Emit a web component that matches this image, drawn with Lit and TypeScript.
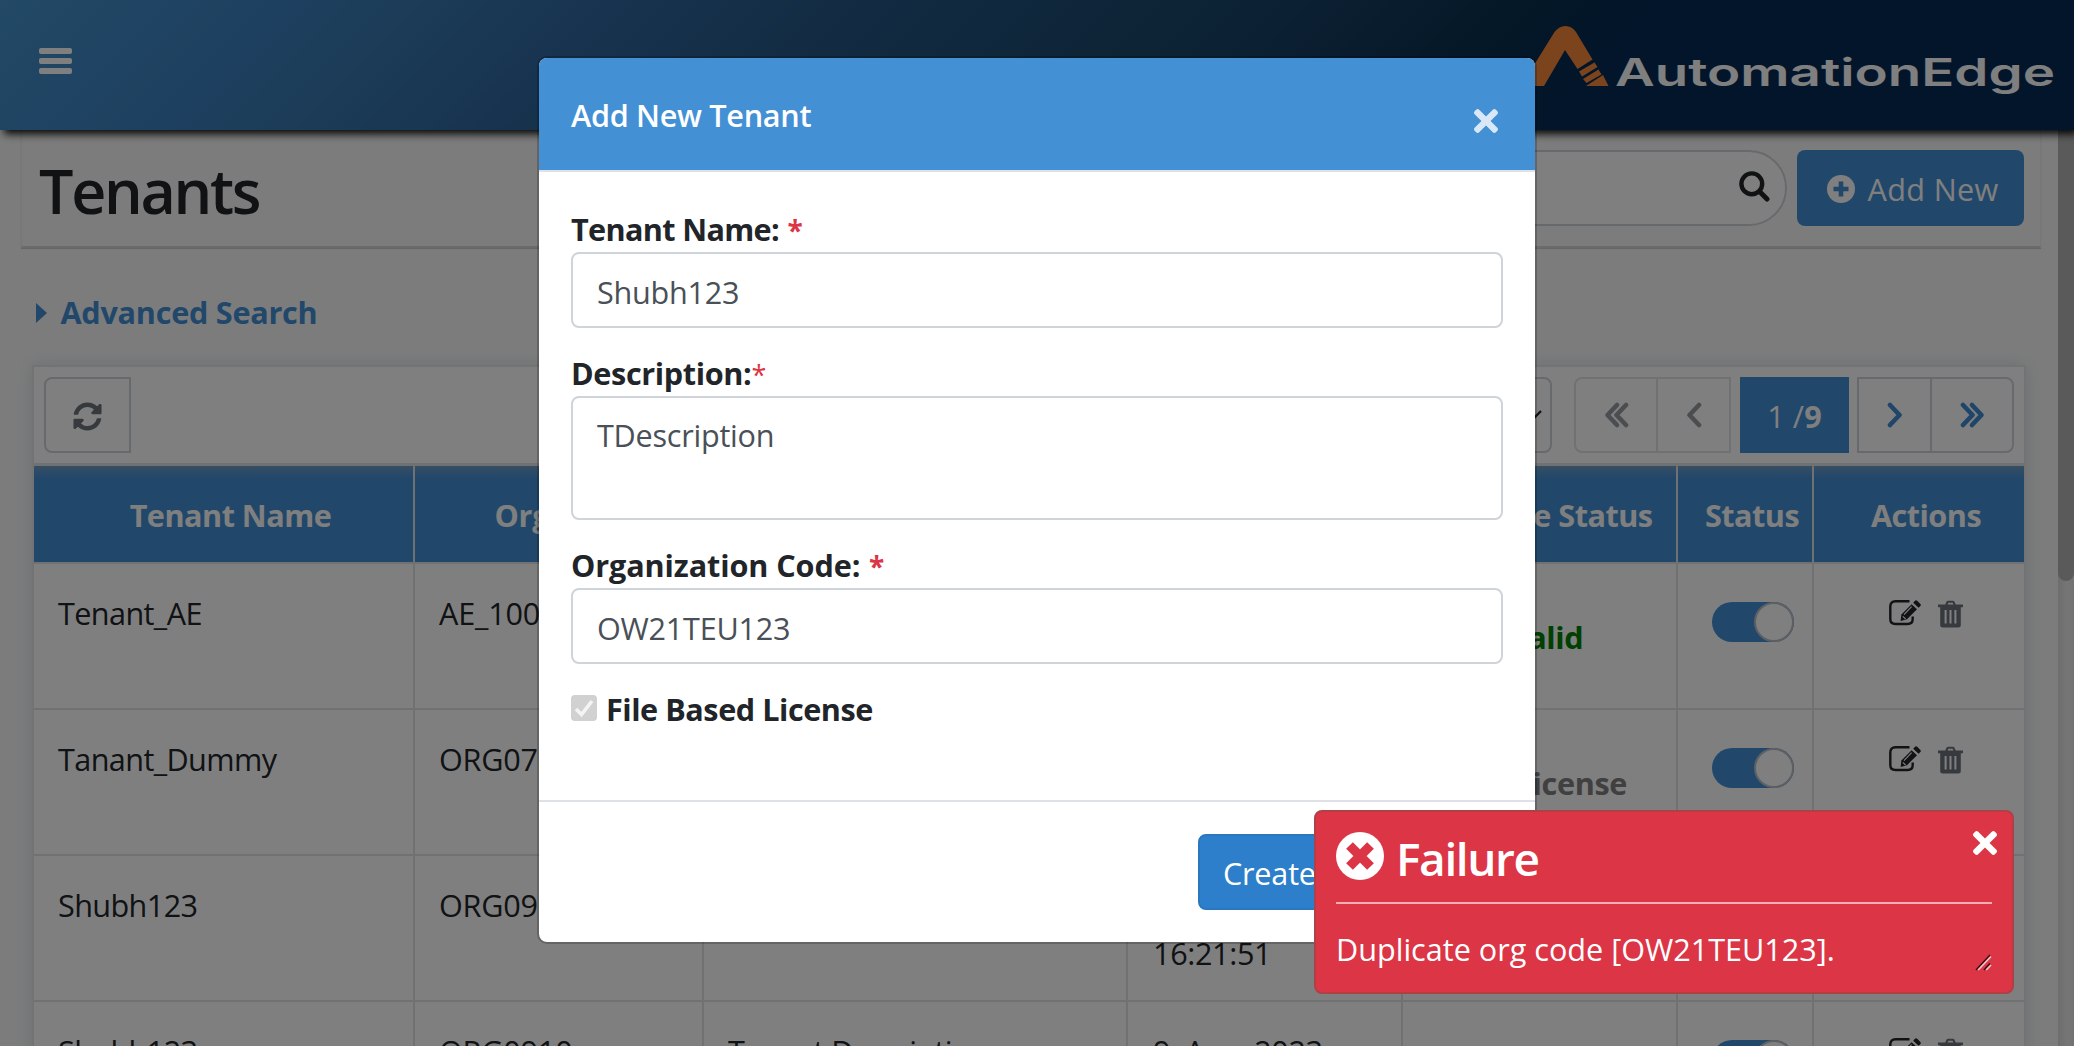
import { LitElement, html, css, svg } from "lit";
import { customElement } from "lit/decorators.js";

interface Tenant {
  name: string;
  org: string;
  description: string;
  created: string[];
  license: string;
  valid: boolean;
}

const TENANTS: Tenant[] = [
  { name: "Tenant_AE", org: "AE_1001", description: "Tenant Description", created: ["4, Aug, 2023", "10:11:12"], license: "Valid", valid: true },
  { name: "Tanant_Dummy", org: "ORG0781", description: "Tenant Description", created: ["7, Aug, 2023", "12:40:05"], license: "No License", valid: false },
  { name: "Shubh123", org: "ORG0910", description: "", created: ["", "16:21:51"], license: "", valid: true },
  { name: "Shubh123", org: "ORG0910", description: "Tenant Description", created: ["9, Aug, 2023", ""], license: "", valid: true },
];

const HEADS = ["Tenant Name", "Org Code", "Description", "Created", "License Status", "Status", "Actions"];

const TIMES = svg`<path fill="currentColor" d="M242.72 256l100.07-100.07c12.28-12.28 12.28-32.19 0-44.48l-22.24-22.24c-12.28-12.28-32.19-12.28-44.48 0L176 189.28 75.93 89.21c-12.28-12.28-32.19-12.28-44.48 0L9.21 111.45c-12.28 12.28-12.28 32.19 0 44.48L109.28 256 9.21 356.07c-12.28 12.28-12.28 32.19 0 44.48l22.24 22.24c12.28 12.28 32.2 12.28 44.48 0L176 322.72l100.07 100.07c12.28 12.28 32.2 12.28 44.48 0l22.24-22.24c12.28-12.28 12.28-32.19 0-44.48L242.72 256z"/>`;

@customElement("app-root")
export class AppRoot extends LitElement {
  static styles = css`
    :host {
      display: block;
      position: relative;
      width: 2074px;
      height: 1046px;
      overflow: hidden;
      background: #f8f9f9;
      color: #212529;
      font: 400 30.6px/48px "Open Sans", "Noto Sans", sans-serif;
    }
    * { box-sizing: border-box; }
    svg { display: block; flex: none; }
    .nav {
      position: relative;
      height: 130px;
      padding: 0 20px 0 39px;
      display: flex;
      justify-content: space-between;
      background: linear-gradient(135deg, #4492cc 0%, #3c80c0 13%, #3a7cb4 17%, #3068a0 27%, #245684 40%, #1c4a70 52%, #163f64 60%, #08304e 69%, #062a54 76%, #062a54 100%);
      box-shadow: 4px 4px 8px rgba(0, 0, 0, 0.95);
      z-index: 1;
    }
    .menu { width: 33px; margin-top: 48px; height: 26px; display: flex; flex-direction: column; justify-content: space-between; }
    .menu i { height: 6px; border-radius: 2px; background: #fff; }
    .body { display: flex; height: 916px; }
    .content { width: 2058px; padding: 0 17px 0 21px; }
    .track { width: 16px; background: linear-gradient(90deg, #dcdcdc, #ececec 60%, #e4e4e4); }
    .thumb { height: 451px; border-radius: 0 0 8px 8px; background: #b5b5b5; }
    .titlebar {
      height: 118px;
      padding: 20px 16px 0 17px;
      display: flex;
      justify-content: space-between;
      border: solid #eceeef;
      border-width: 0 1px;
      border-bottom: 2px solid #d3d6d9;
      box-shadow: 0 1px 1px #ccc;
    }
    h1 { margin: 5px 0 0 0; font-size: 61px; line-height: 72px; font-weight: 600; letter-spacing: -2.3px; }
    .tools { display: flex; gap: 10px; }
    .search { width: 600px; height: 76px; border: 2px solid #ced4da; border-radius: 38px; background: #fff; padding: 19px 15px; display: flex; justify-content: flex-end; }
    .add { width: 227px; height: 76px; border-radius: 8px; background: #4390d5; color: #fff; display: flex; align-items: center; padding: 2px 0 0 30px; gap: 12.5px; letter-spacing: 0.35px; }
    .advanced { height: 96px; margin: 21px 0 0 15px; display: flex; gap: 13.5px; align-items: flex-start; color: #4390d5; font-weight: 700; }
    .advanced svg { margin-top: 34px; }
    .advanced span { margin-top: 19px; letter-spacing: -0.25px; }
    .panel { margin-left: 11px; width: 1994px; border: 2px solid #e3e6e9; background: #fff; box-shadow: 0 0 16px rgba(70, 100, 120, 0.16); }
    .bar { height: 99px; padding: 10px 10px 0 10px; display: flex; justify-content: space-between; border-bottom: 3px solid #dfe2e5; }
    .refresh { width: 87px; height: 76px; border: 2px solid #ced4da; border-radius: 8px 0 0 8px; color: #6c757d; display: flex; align-items: center; justify-content: center; padding-top: 2px; }
    .pager { display: flex; height: 76px; }
    .select { width: 200px; border: 2px solid #ced4da; border-radius: 8px; margin-right: 22px; display: flex; align-items: center; justify-content: flex-end; padding-right: 8px; }
    .pg { border: 2px solid #ced4da; display: flex; align-items: center; justify-content: center; color: #3f8bd3; }
    .pg.off { border-color: #dee2e6; color: #979ca1; }
    .first { width: 84px; border-radius: 8px 0 0 8px; }
    .mid { width: 75px; margin-left: -2px; }
    .last { width: 84px; border-radius: 0 8px 8px 0; margin-left: -2px; }
    .current { width: 109px; margin: 0 10px 0 9px; background: #4390d5; color: #fff; display: flex; align-items: center; justify-content: center; white-space: pre; letter-spacing: 0.1px; padding-top: 1px; }
    .grid { display: grid; grid-template-columns: 381px 289px 424px 275px 275px 136px 210px; }
    .th { height: 98px; border-right: 2px solid #dee2e6; border-bottom: 2px solid #dee2e6; background: linear-gradient(#6f9cc6 0, #4390d5 12px); color: #fff; font-weight: 700; text-align: center; padding: 25px 0 0 14px; white-space: nowrap; letter-spacing: -0.5px; }
    .th:nth-child(2) { padding-left: 9px; letter-spacing: -0.3px; }
    .td { height: 146px; border-right: 2px solid #dee2e6; border-bottom: 2px solid #dee2e6; padding: 25px 0 0 24px; white-space: nowrap; letter-spacing: -0.6px; }
    .td:nth-child(7n + 2) { letter-spacing: -0.2px; }
    .td:nth-child(7n + 4) { padding-left: 25px; letter-spacing: -0.35px; }
    .th:nth-child(7n), .td:nth-child(7n) { border-right: 0; }
    .td.lic { padding: 49px 0 0 13px; text-align: center; font-weight: 700; color: #808080; letter-spacing: -0.35px; }
    .td.lic.ok { color: #008000; }
    .td.tg { padding: 38px 0 0 34px; }
    .toggle { width: 82px; height: 40px; border-radius: 20px; background: #4390d5; display: flex; justify-content: flex-end; }
    .toggle i { width: 40px; height: 40px; border-radius: 50%; background: #fff; border: 2px solid #b9bfc6; }
    .td.act { display: flex; gap: 16px; padding: 36px 0 0 75px; }
    .bin { color: #6c757d; }
    .shade { position: absolute; inset: 0; background: rgba(0, 0, 0, 0.5); z-index: 2; }
    .modal { position: absolute; z-index: 3; left: 537px; top: 56px; width: 1000px; height: 888px; border: 2px solid rgba(0, 0, 0, 0.2); border-radius: 10px; background: #fff; background-clip: padding-box; overflow: hidden; }
    .mhead { height: 114px; background: #4390d5; border-bottom: 2px solid #dee2e6; color: #fff; display: flex; justify-content: space-between; padding: 33px 37px 0 32px; font-weight: 600; letter-spacing: -0.3px; }
    .mhead svg { margin-top: 18px; opacity: 0.8; }
    .mbody { height: 628px; padding: 33px 32px 0; }
    .lab { display: block; height: 46px; font-weight: 700; letter-spacing: -0.65px; white-space: pre; }
    .lab b { color: #dc3545; font-weight: 700; font-size: 28px; margin-left: 1px; }
    .lab b.thin { font-weight: 400; font-size: 27px; margin: 0; }
    .lab.desc { letter-spacing: -0.35px; }
    .lab.org { letter-spacing: -0.1px; }
    .lab.file { letter-spacing: -0.45px; margin: 0 0 0 -1px; }
    .field { height: 76px; border: 2px solid #ced4da; border-radius: 8px; color: #495057; padding: 14px 24px; margin: 1px 0 21px; letter-spacing: -0.25px; }
    .field.area { height: 124px; padding-top: 13px; }
    .check { display: flex; gap: 10px; }
    .check .box { width: 26px; height: 26px; margin-top: 10px; border-radius: 4px; background: #d1d1d1; }
    .mfoot { border-top: 2px solid #dee2e6; padding: 32px 0 0 659px; }
    .create { width: 144px; height: 76px; border-radius: 8px; border: 2px solid #2b77bd; background: #2d7fcb; color: #fff; padding: 13px 0 0 23px; letter-spacing: -0.2px; }
    .toast { position: absolute; z-index: 4; left: 1314px; top: 810px; width: 700px; height: 184px; border: 2px solid #b04045; border-radius: 8px; background: #dc3545; color: #fff; padding: 20px; }
    .trow { display: flex; height: 72px; border-bottom: 2px solid rgba(255, 255, 255, 0.6); }
    .trow h2 { margin: -4px 0 0 12px; flex: 1; font-size: 46px; line-height: 60px; font-weight: 600; letter-spacing: -1.4px; }
    .trow .x { margin: -1px -5px 0 0; }
    .msg { display: flex; justify-content: space-between; padding-top: 21px; letter-spacing: 0; }
    .msg svg { margin-top: 29px; }
  `;

  private icon(d: string, w: number, h: number, vb: string) {
    return html`<svg width=${w} height=${h} viewBox=${vb} preserveAspectRatio="none"><path fill="currentColor" d=${d}></path></svg>`;
  }

  private chevrons(points: string[], w: number) {
    return html`<svg width=${w} height="28" viewBox="0 0 ${w} 28" fill="none" stroke="currentColor" stroke-width="4.6" stroke-linecap="round" stroke-linejoin="round">
      ${points.map((p) => svg`<polyline points=${p}></polyline>`)}
    </svg>`;
  }

  private row(t: Tenant) {
    return html`
      <div class="td">${t.name}</div>
      <div class="td">${t.org}</div>
      <div class="td">${t.description}</div>
      <div class="td">${t.created[0]}<br />${t.created[1]}</div>
      <div class="td lic ${t.valid ? "ok" : ""}">${t.license}</div>
      <div class="td tg"><div class="toggle"><i></i></div></div>
      <div class="td act">
        <svg width="33" height="27" viewBox="0 0 33 27">
          <path d="M20.5 1.300H6.5Q1.3 1.300 1.3 6.300V19Q1.3 24 6.5 24H18.5Q23.700 24 23.700 19V16.5" fill="none" stroke="#212529" stroke-width="2.4" />
          <path d="M22.600 4.2L28 9.2L18 19.200L11.600 21L12.400 14.600Z" fill="#212529" />
          <path d="M24.2 2.7L26.200 .6Q27.2 0 28.2 .8L31.400 3.9Q32.4 5 31.400 6L29.6 7.8Z" fill="#212529" />
          <path d="M15 14.600L22.600 6.7M13.800 16.4L16.600 19" stroke="#fff" stroke-width="1.1" />
        </svg>
        <svg class="bin" width="25" height="28" viewBox="0 0 25 28">
          <path d="M0 4.6H25V7.2H0ZM7 5L8.6 1.6Q9 .8 10 .8H15Q16 .8 16.4 1.6L18 5H15.6L14.6 2.8H10.4L9.4 5ZM2.2 7H22.8V24.9Q22.8 27.400 20.2 27.400H4.8Q2.2 27.400 2.2 24.9Z" fill="currentColor" />
          <path d="M7.6 10V23.400M12.5 10V23.400M17.4 10V23.400" stroke="#fff" stroke-width="2" />
        </svg>
      </div>`;
  }

  render() {
    return html`
      <header class="nav">
        <div class="menu"><i></i><i></i><i></i></div>
        <svg width="540" height="130" viewBox="1514 0 540 130">
          <path d="M1521 86L1554.500 32Q1559 26 1565.500 26Q1572 26 1576 32L1592.500 59.500L1577.500 69L1565 50L1544 86Z" fill="#f7883a" />
          <path d="M1579 71.500L1594.500 62.500L1597.500 67L1582 76.500ZM1583 79L1598.500 69.500L1601.500 74.500L1586.500 83ZM1586 86L1603 75L1608.500 86Z" fill="#f7883a" />
          <text x="1615" y="86" textLength="440" lengthAdjust="spacingAndGlyphs" font-family="Inter, sans-serif" font-weight="600" font-size="38.5" fill="#fff">AutomationEdge</text>
        </svg>
      </header>
      <div class="body">
        <main class="content">
          <section class="titlebar">
            <h1>Tenants</h1>
            <div class="tools">
              <div class="search">
                <svg width="31" height="31" viewBox="0 0 31 31" fill="none" stroke="#212529"><circle cx="12.800" cy="12.800" r="10.400" stroke-width="4.400" /><path d="M20.500 20.500L28 28" stroke-width="5" stroke-linecap="round" /></svg>
              </div>
              <div class="add">
                <svg width="28" height="28" viewBox="0 0 28 28"><circle cx="14" cy="14" r="14" fill="#fff" /><path d="M14 6.500V21.500M6.500 14H21.500" stroke="#4390d5" stroke-width="4.600" /></svg>
                <span>Add New</span>
              </div>
            </div>
          </section>
          <div class="advanced">
            <svg width="11" height="20" viewBox="0 0 11 20"><path d="M0 0L11 10L0 20Z" fill="currentColor" /></svg>
            <span>Advanced Search</span>
          </div>
          <section class="panel">
            <div class="bar">
              <div class="refresh">
                ${this.icon("M370.72 133.28C339.458 104.008 298.888 87.962 255.848 88c-77.458.068-144.328 53.178-162.791 126.85-1.344 5.363-6.122 9.15-11.651 9.15H24.103c-7.498 0-13.194-6.807-11.807-14.176C33.933 94.924 134.813 8 256 8c66.448 0 126.791 26.136 171.315 68.685L463.03 40.97C478.149 25.851 504 36.559 504 57.941V192c0 13.255-10.745 24-24 24H345.941c-21.382 0-32.09-25.851-16.971-40.971l41.75-41.749zM32 296h134.059c21.382 0 32.09 25.851 16.971 40.971l-41.75 41.75c31.262 29.273 71.835 45.319 114.876 45.28 77.418-.07 144.315-53.144 162.787-126.849 1.344-5.363 6.122-9.15 11.651-9.15h57.304c7.498 0 13.194 6.807 11.807 14.176C478.067 417.076 377.187 504 256 504c-66.448 0-126.791-26.136-171.315-68.685L48.97 471.03C33.851 486.149 8 475.441 8 454.059V320c0-13.255 10.745-24 24-24z", 29, 29, "0 0 512 512")}
              </div>
              <div class="pager">
                <div class="select"><svg width="18" height="12" viewBox="0 0 18 12" fill="none" stroke="#212529" stroke-width="2.400"><path d="M1 2L9 10L17 2" /></svg></div>
                <div class="pg off first">${this.chevrons(["13,4 3.500,14 13,24", "22,4 12.500,14 22,24"], 25)}</div>
                <div class="pg off mid">${this.chevrons(["13,4 3.500,14 13,24"], 16)}</div>
                <div class="current">1 /<b>9</b></div>
                <div class="pg mid">${this.chevrons(["3,4 12.500,14 3,24"], 16)}</div>
                <div class="pg last">${this.chevrons(["3,4 12.500,14 3,24", "12,4 21.500,14 12,24"], 25)}</div>
              </div>
            </div>
            <div class="grid">
              ${HEADS.map((h) => html`<div class="th">${h}</div>`)}
            </div>
            <div class="grid">${TENANTS.map((t) => this.row(t))}</div>
          </section>
        </main>
        <div class="track"><div class="thumb"></div></div>
      </div>

      <div class="shade"></div>

      <section class="modal">
        <div class="mhead">
          <span>Add New Tenant</span>
          <svg width="24" height="24" viewBox="0 80 352 352">${TIMES}</svg>
        </div>
        <div class="mbody">
          <span class="lab">Tenant Name: <b>*</b></span>
          <div class="field">Shubh123</div>
          <span class="lab desc">Description:<b class="thin">*</b></span>
          <div class="field area">TDescription</div>
          <span class="lab org">Organization Code: <b>*</b></span>
          <div class="field">OW21TEU123</div>
          <div class="check">
            <svg class="box" viewBox="0 0 26 26"><path d="M5 14L10.500 19.500L21 6" fill="none" stroke="#f4f4f4" stroke-width="3.600" /></svg>
            <span class="lab file">File Based License</span>
          </div>
        </div>
        <div class="mfoot"><div class="create">Create</div></div>
      </section>

      <section class="toast">
        <div class="trow">
          <svg width="48" height="48" viewBox="0 0 48 48"><circle cx="24" cy="24" r="24" fill="#fff" /><path d="M13.500 13.500L34.500 34.500M34.500 13.500L13.500 34.500" stroke="#dc3545" stroke-width="9.500" /></svg>
          <h2>Failure</h2>
          <svg class="x" width="24" height="24" viewBox="0 80 352 352">${TIMES}</svg>
        </div>
        <div class="msg">
          <span>Duplicate org code [OW21TEU123].</span>
          <svg width="17" height="17" viewBox="0 0 17 17" fill="none" stroke-width="1.600"><path d="M1 16L15 1M9 16L15 9.500" stroke="#3a1015" /><path d="M3.200 16L16 2.500M11.200 16L16 11" stroke="#f6c5ca" /></svg>
        </div>
      </section>
    `;
  }
}
